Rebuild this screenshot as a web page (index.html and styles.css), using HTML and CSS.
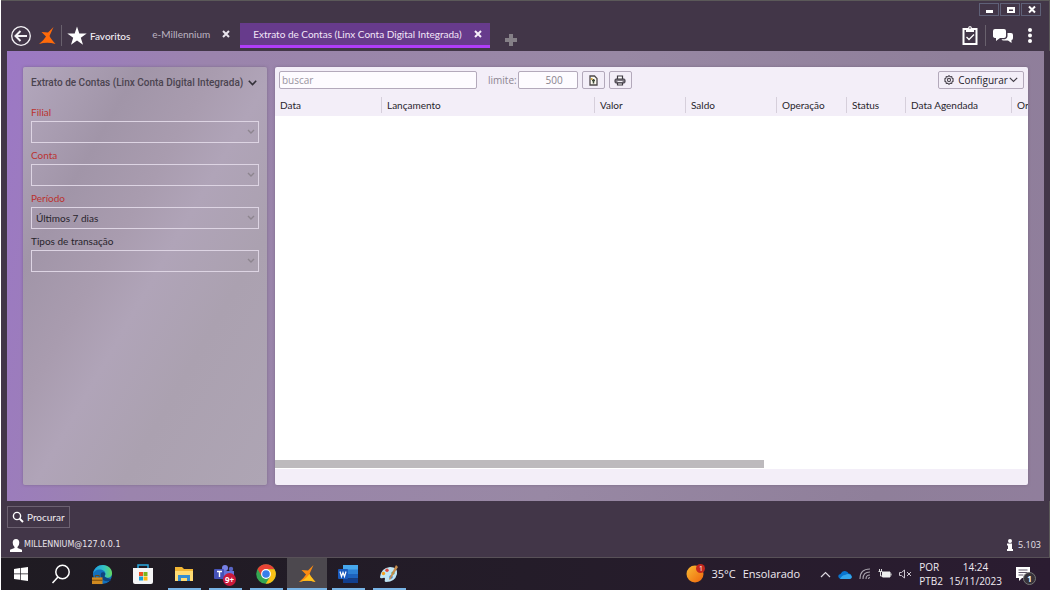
FILE: index.html
```html
<!DOCTYPE html>
<html lang="pt-BR">
<head>
<meta charset="utf-8">
<meta name="viewport" content="width=device-width, initial-scale=1">
<title>Extrato de Contas (Linx Conta Digital Integrada)</title>
<link rel="stylesheet" href="styles.css">
</head>
<body>
<div class="app">
  <div class="titlebar">
    <button class="win" aria-label="Minimizar"><svg width="19" height="11"><path d="M6 6h7v3H6z" fill="#fff"/></svg></button>
    <button class="win" aria-label="Maximizar"><svg width="19" height="11"><path d="M6 3h8v6H6zM8 5.500h4V7H8z" fill="#fff" fill-rule="evenodd"/></svg></button>
    <button class="win" aria-label="Fechar"><svg width="19" height="11"><path d="M7 2.500l6 6M13 2.500l-6 6" stroke="#fff" stroke-width="2"/></svg></button>
  </div>

  <header class="toolbar">
    <button class="icon-btn back" aria-label="Voltar"><svg width="22" height="22" viewBox="0 0 22 22" fill="none" stroke="#f4f2f6"><circle cx="11" cy="11" r="9.300" stroke-width="1.300"/><path d="M17 11H6M10.500 6l-5 5 5 5" stroke-width="2"/></svg></button>
    <button class="icon-btn logo" aria-label="Linx"><svg width="17" height="20" viewBox="0 0 17 20"><path d="M14.500 1L10.500 10Q12 13 16.500 18 8 15.500 0 18 5 14 7 10.500L2.500 6 9 6.500z" fill="#ff6a0a"/></svg></button>
    <span class="divider"></span>
    <button class="favorites"><svg width="20" height="20" viewBox="0 0 20 20"><path d="M10 .5l2.300 6.900 7.400.1-5.900 4.300 2.200 7L10 14.600l-6 4.200 2.200-7L.3 7.500l7.400-.1z" fill="#fff"/></svg><span>Favoritos</span></button>
    <nav class="tabs">
      <div class="tab"><a href="#">e-Millennium</a><button class="icon-btn" aria-label="Fechar e-Millennium"><svg width="8" height="8"><path d="M1 1l6 6M7 1L1 7" stroke="#e9e4ed" stroke-width="2"/></svg></button></div>
      <div class="tab active"><a href="#">Extrato de Contas (Linx Conta Digital Integrada)</a><button class="icon-btn" aria-label="Fechar Extrato de Contas"><svg width="8" height="8"><path d="M1 1l6 6M7 1L1 7" stroke="#f7effb" stroke-width="2"/></svg></button></div>
      <button class="icon-btn add" aria-label="Nova aba"><svg width="12" height="12"><path d="M6 0v12M0 6h12" stroke="#858087" stroke-width="4"/></svg></button>
    </nav>
    <div class="tools">
      <button class="icon-btn" aria-label="Tarefas"><svg width="16" height="21" viewBox="0 0 16 21" fill="none"><path d="M1.500 4h13v15h-13z" stroke="#fff" stroke-width="2"/><path d="M4 3.500h2Q6 1 8 1t2 2.500h2V7H4z" fill="#fff"/><circle cx="8" cy="3" r=".8" fill="#423648"/><path d="M4.500 12l2.500 2.500 5-5" stroke="#fff" stroke-width="1.300"/></svg></button>
      <span class="divider"></span>
      <button class="icon-btn" aria-label="Mensagens"><svg width="21" height="16" viewBox="0 0 21 16"><path d="M2 1h9q2 0 2 2v5q0 2-2 2H7l-4 3V10Q0 10 0 8V3q0-2 2-2z" fill="#fff"/><path d="M14.500 5H18q2 0 2 2v3q0 2-1.500 2v3L15 12.500h-4.500q-1.500 0-2-1.300H12q2.500-.5 2.500-3z" fill="#fff"/></svg></button>
      <button class="icon-btn" aria-label="Mais opções"><svg width="6" height="17"><g fill="#fff"><circle cx="3" cy="3" r="2"/><circle cx="3" cy="8.500" r="2"/><circle cx="3" cy="14" r="2"/></g></svg></button>
    </div>
  </header>

  <main class="workspace">
    <form class="filters">
      <button type="button" class="filters-title"><span>Extrato de Contas (Linx Conta Digital Integrada)</span><svg width="9" height="6"><path d="M.8.800l3.700 3.700L8.200.8" fill="none" stroke="#333038" stroke-width="1.600"/></svg></button>
      <label class="required" for="filial">Filial</label>
      <div class="select"><select id="filial"><option></option></select><svg width="8" height="6"><path d="M1 1l3 3 3-3" fill="none" stroke="#8d858f" stroke-width="1.400"/></svg></div>
      <label class="required" for="conta">Conta</label>
      <div class="select"><select id="conta"><option></option></select><svg width="8" height="6"><path d="M1 1l3 3 3-3" fill="none" stroke="#8d858f" stroke-width="1.400"/></svg></div>
      <label class="required" for="periodo">Período</label>
      <div class="select"><select id="periodo"><option>Últimos 7 dias</option></select><svg width="8" height="6"><path d="M1 1l3 3 3-3" fill="none" stroke="#8d858f" stroke-width="1.400"/></svg></div>
      <label for="tipos">Tipos de transação</label>
      <div class="select"><select id="tipos"><option></option></select><svg width="8" height="6"><path d="M1 1l3 3 3-3" fill="none" stroke="#8d858f" stroke-width="1.400"/></svg></div>
    </form>

    <section class="results">
      <div class="results-bar">
        <input class="search" type="text" placeholder="buscar" aria-label="buscar">
        <label class="limit-label" for="limite">limite:</label>
        <input class="limit" id="limite" type="text" value="500">
        <button class="tool" aria-label="Exportar"><svg width="9" height="11" viewBox="0 0 9 11"><path d="M1 1h4.500L8 3.500V10H1z" fill="#fbf9ef" stroke="#4d484a" stroke-width="1.300"/><path d="M4.500 8.500V4M3 5.500h3" stroke="#3e4a38" stroke-width="1.500"/><path d="M2 3h1.500v2H2z" fill="#d5a63c"/></svg></button>
        <button class="tool" aria-label="Imprimir"><svg width="12" height="11" viewBox="0 0 12 11"><path d="M3.500 4V1h5v3M3.500 7.500V10h5V7.500" fill="#fff" stroke="#3e3a42" stroke-width="1.200"/><rect x="1" y="4" width="10" height="4" rx="1" fill="#7b7780" stroke="#3e3a42"/><path d="M3.500 6.500h5" stroke="#f4f1f7"/></svg></button>
        <button class="configure"><svg width="10" height="10" viewBox="0 0 10 10" fill="none" stroke="#4b464f"><path d="M5 .7l1.200 1 1.500-.1.400 1.500L9.300 4 8.800 5l.5 1-1.200.9-.4 1.500-1.500-.1-1.200 1-1.200-1-1.500.1-.4-1.500L.7 6l.5-1-.5-1 1.200-.9.400-1.500 1.500.1z" stroke-width="1.100"/><circle cx="5" cy="5" r="1.600" stroke-width="1.100"/></svg><span>Configurar</span><svg width="9" height="6"><path d="M.8.800l3.700 3.700L8.200.8" fill="none" stroke="#47424b" stroke-width="1.200"/></svg></button>
      </div>
      <div class="grid">
        <table>
          <colgroup><col class="c-data"><col class="c-lanc"><col class="c-valor"><col class="c-valor"><col class="c-oper"><col class="c-status"><col class="c-agenda"><col></colgroup>
          <thead><tr><th>Data</th><th>Lançamento</th><th>Valor</th><th>Saldo</th><th>Operação</th><th>Status</th><th>Data Agendada</th><th>Or</th></tr></thead>
        </table>
      </div>
      <div class="scroll"><div class="thumb"></div></div>
      <div class="results-foot"></div>
    </section>
  </main>

  <footer class="actions">
    <button class="procurar"><svg width="12" height="12" viewBox="0 0 12 12" fill="none" stroke="#fff"><circle cx="5" cy="5" r="3.600" stroke-width="1.400"/><path d="M7.600 7.600L11 11" stroke-width="2"/></svg><span>Procurar</span></button>
    <div class="status">
      <span class="user"><svg width="12" height="13" viewBox="0 0 12 13"><path d="M6 0q3.300 0 3.300 3.800Q9.300 6.500 7.500 8v1l4.500 1.800V13H0v-2.200L4.500 9V8Q2.700 6.500 2.700 3.800 2.700 0 6 0z" fill="#fff"/></svg>MILLENNIUM@127.0.0.1</span>
      <span class="version"><svg width="6" height="12" viewBox="0 0 6 12" fill="#fff"><circle cx="3" cy="2" r="2"/><path d="M0 4.500h5V10h1v2H0v-2h1V6.500H0z"/></svg>5.103</span>
    </div>
  </footer>

  <div class="taskbar">
    <div class="apps">
      <button aria-label="Iniciar"><svg width="14" height="14" viewBox="0 0 14 14" fill="#fff"><path d="M0 2l6-.9v5.500H0zM6.700 1L14 0v6.600H6.700zM0 7.300h6v5.500L0 12zM6.700 7.300H14V14l-7.300-1z"/></svg></button>
      <button aria-label="Pesquisar"><svg width="20" height="20" viewBox="0 0 20 20" fill="none" stroke="#fff" stroke-width="1.500"><circle cx="11.500" cy="8" r="6.700"/><path d="M7 13l-5.500 6"/></svg></button>
      <button aria-label="Edge"><svg width="21" height="21" viewBox="0 0 22 22"><defs><linearGradient id="edge"><stop stop-color="#1e9be0"/><stop offset=".6" stop-color="#35c3c0"/><stop offset="1" stop-color="#66d95e"/></linearGradient></defs><circle cx="11" cy="11" r="10" fill="#1270bd"/><path d="M1 10.500C2 4.500 6 1 11.500 1 17 1 21 5 21 9.700c0 3.300-2.300 4.800-4.900 4.800-2.300 0-3.500-1-3-1.900.7-1 .9-1.600.9-2.500 0-2.500-2.600-4.400-6.200-4.400-3.200 0-5.800 1.900-6.800 4.800z" fill="url(#edge)"/><path d="M9.500 9.500c-1.500 4 1 8.500 6.500 8.500 2 0 3.300-.6 4-1.100-1-2.400-5-1.400-7-4.300.7-1 .9-1.600.9-2.500-1-1.500-3.200-2-4.400-.6z" fill="#10457f"/><path d="M0 14h11v7H0z" fill="#d08a20"/><path d="M3.500 14v-2h4v2M0 17h11" fill="none" stroke="#774809"/></svg></button>
      <button aria-label="Store"><svg width="20" height="21" viewBox="0 0 20 21"><path d="M5 5V1h10v4" fill="none" stroke="#29a9df" stroke-width="1.500"/><path d="M0 4h20v14q0 2-2 2H2q-2 0-2-2z" fill="#f5f5f6"/><path d="M6 8h4v4H6z" fill="#ee5023"/><path d="M10.500 8h4v4h-4z" fill="#7ab51d"/><path d="M6 12.500h4v4H6z" fill="#159fda"/><path d="M10.500 12.500h4v4h-4z" fill="#fab812"/></svg></button>
      <button class="open" aria-label="Explorador de Arquivos"><svg width="18" height="16" viewBox="0 0 18 16"><path d="M0 1h7l2 2h9v12H0z" fill="#f2b635"/><path d="M0 5h18v10H0z" fill="#ffdb73"/><path d="M3 9h12v6h-3v-3H6v3H3z" fill="#348ed1"/></svg></button>
      <button class="open" aria-label="Teams"><svg width="22" height="21" viewBox="0 0 22 21"><circle cx="11" cy="4" r="3" fill="#7680e5"/><circle cx="17" cy="5" r="2.200" fill="#5965c5"/><path d="M8 7h12v7q-3 4-6 4-6-1-6-5z" fill="#6572da"/><rect y="5" width="10" height="10" rx="1" fill="#4652b8"/><path d="M3 7.500h5M5.500 7.500V13" stroke="#fff" stroke-width="1.400"/></svg><span class="badge red">9+</span></button>
      <button class="open" aria-label="Chrome"><svg width="20" height="20" viewBox="0 0 20 20"><circle cx="10" cy="10" r="9.800" fill="#35a853"/><path d="M1.500 5.100A9.800 9.800 0 0 1 18.500 5.200H10L5.800 12.400z" fill="#e94335"/><path d="M18.500 5.200A9.800 9.800 0 0 1 9.700 19.800l4.500-7.400L10 5.200z" fill="#fbc116"/><circle cx="10" cy="10" r="4.900" fill="#fff"/><circle cx="10" cy="10" r="3.800" fill="#397fe9"/></svg></button>
      <button class="open current" aria-label="Millennium"><svg width="17" height="20" viewBox="0 0 17 20"><path d="M14.500 1L10.500 10Q12 13 16.500 18 8 15.500 0 18 5 14 7 10.500L2.500 6 9 6.500z" fill="#fb8a12"/><path d="M10.500 10Q12 13 16.500 18 8 15.500 0 18q6-2 10.500-8z" fill="#ffc21c"/></svg></button>
      <button class="open" aria-label="Word"><svg width="20" height="18" viewBox="0 0 20 18"><path d="M5 0h15v5H5z" fill="#47a8ed"/><path d="M5 4.500h15V9H5z" fill="#2d81d5"/><path d="M5 9h15v4.500H5z" fill="#1d62bc"/><path d="M5 13.500h15V18H5z" fill="#123f8e"/><rect y="4" width="10" height="10" rx="1" fill="#195abd"/><path d="M2 6.500l1.500 5L5 7.500l1.500 4 1.500-5" fill="none" stroke="#fff" stroke-width="1.200"/></svg></button>
      <button class="open" aria-label="Paint"><svg width="20" height="20" viewBox="0 0 20 20"><path d="M1 13Q2 4 11 3q8 0 7 7-2 8-11 8-2 0-1-3 0-2-2-1-3 1-3-1z" fill="#bfe5f5"/><circle cx="4.500" cy="9.500" r="1.700" fill="#f4a11e"/><circle cx="8" cy="6.300" r="1.700" fill="#d9483e"/><circle cx="14" cy="9" r="1.600" fill="#4a9e4a"/><circle cx="12" cy="13" r="1.700" fill="#2878cf"/><path d="M17 1l2 2-8 13-1-1z" fill="#c78c4b"/></svg></button>
    </div>
    <div class="tray">
      <button class="weather"><span class="sun"><svg width="18" height="18"><defs><linearGradient id="sun" x2="1" y2="1"><stop stop-color="#f8bb32"/><stop offset="1" stop-color="#ef650c"/></linearGradient></defs><circle cx="9" cy="9" r="8.500" fill="url(#sun)"/></svg><span class="alert">1</span></span><span>35°C</span><span>Ensolarado</span></button>
      <div class="tray-icons">
        <svg width="11" height="7"><path d="M1 6l4.500-4.500L10 6" fill="none" stroke="#ddd8e0" stroke-width="1.200"/></svg>
        <svg width="14" height="9" viewBox="0 0 14 9"><path d="M1 8Q-1 5 2.500 4 5-1 9.500 2l1 1.500Q14 4 13.500 7q-.5 2-2 2h-9z" fill="#0875cf"/><path d="M2 9Q4 5 7 5q5-3 7 2-.5 2-2.500 2z" fill="#34a6ec"/></svg>
        <svg width="12" height="12" viewBox="0 0 12 12" fill="none" stroke="#aaa4ae" stroke-width="1.100"><path d="M1 11Q1 1 11 1M4 11Q4 4 11 4M7 11q0-4 4-4M9.500 11q0-1.500 1.500-1.500"/></svg>
        <svg width="14" height="10" viewBox="0 0 14 10"><path d="M4.500 3H12v5H4.500zM13 4.500v2" fill="#eee" stroke="#eee"/><path d="M1.500 0v2M3.500 0v2M.5 2.500h4M2.500 3v4h2" fill="none" stroke="#ddd"/></svg>
        <svg width="13" height="10" viewBox="0 0 13 10" fill="none" stroke="#ccc6d0"><path d="M.5 3.500h2L5.500 1v8l-3-2.500h-2zM8 3l4 4M12 3L8 7"/></svg>
      </div>
      <div class="stack lang"><span>POR</span><span>PTB2</span></div>
      <div class="stack clock"><span>14:24</span><span>15/11/2023</span></div>
      <button class="notes" aria-label="Notificações"><svg width="14" height="14" viewBox="0 0 14 14"><path d="M0 0h14v11H6l-3 3v-3H0z" fill="#fff"/><path d="M2.500 3h9M2.500 5.500h9M2.500 8h5" stroke="#5f5668"/></svg><span class="badge dark">1</span></button>
    </div>
  </div>
</div>
</body>
</html>
```
FILE: styles.css
```css
* { box-sizing: border-box; }

body {
  margin: 0;
  background: #fff;
  font-family: Lato, "Open Sans", sans-serif;
  font-size: 10px;
  line-height: 14px;
  color: #28242c;
}

button, input, select { font: inherit; color: inherit; }
button { margin: 0; padding: 0; border: 0; background: none; }
a { color: inherit; text-decoration: none; }
svg { display: block; flex: none; }

.app {
  display: flex;
  flex-direction: column;
  height: 100vh;
  padding: 0 1px 1px;
  overflow: hidden;
}

/* Window frame and tabs */
.titlebar {
  display: flex;
  justify-content: flex-end;
  gap: 1px;
  height: 20px;
  padding: 2px 8px 0 0;
  border-top: 1px solid #5b5959;
  border-right: 1px solid #5b5959;
  background: #423648;
}
.win { height: 13px; border: 1px solid #5f6178; }
.win svg { width: 18px; }

.toolbar {
  display: flex;
  align-items: center;
  height: 31px;
  padding: 0 16px 0 9px;
  border-right: 1px solid #5b5959;
  background: #423648;
  color: #f3eff5;
}
.icon-btn { display: flex; align-items: center; justify-content: center; }
.logo { margin: 0 5px 0 7px; }
.divider { width: 1px; height: 21px; background: #69616d; }
.favorites { display: flex; align-items: center; gap: 3px; margin-left: 5px; font-weight: 500; }

.tabs { display: flex; align-self: stretch; margin-left: 12px; padding: 3px 0; }
.tab {
  display: flex;
  align-items: center;
  justify-content: space-between;
  gap: 12px;
  padding: 0 10px;
  color: #bdb5c2;
  border-bottom: 3px solid transparent;
}
.tab.active {
  padding: 0 8px 0 13px;
  background: #673b8c;
  color: #f3e7f8;
  border-color: #b03dfa;
}
.add { margin: 8px 0 0 15px; }

.tools { display: flex; align-items: center; gap: 7px; margin-left: auto; }
.tools .icon-btn:last-child { margin-left: 6px; }

/* Work area */
.workspace {
  flex: 1;
  min-height: 0;
  display: flex;
  gap: 8px;
  padding: 16px;
  border: solid #423648;
  border-width: 0 6px;
  background: linear-gradient(100deg, #9c78c5 0, #9b84ad 18%, #9888a4 55%, #8f7f9a 85%, #907e9c 100%);
}

.filters {
  flex: 0 0 244px;
  min-width: 0;
  display: flex;
  flex-direction: column;
  padding: 9px 8px;
  border-radius: 2px;
  background: linear-gradient(120deg, #b3a7bd 0, #a195a8 24%, #a99caf 40%, #b0a4b8 52%, #aba1b0 70%, #aea5b4 100%);
  box-shadow: 0 0 3px #62516f88;
}
.filters-title {
  display: flex;
  align-items: center;
  gap: 5px;
  height: 14px;
  margin-bottom: 15px;
  color: #4b4450;
  font-family: Roboto, "Open Sans", sans-serif;
  font-weight: 500;
  white-space: nowrap;
}
.filters label { height: 16px; }
.filters label.required { color: #bb3330; }
.select { position: relative; margin-bottom: 5px; }
.select select {
  display: block;
  width: 100%;
  height: 22px;
  padding: 0 4px;
  border: 1px solid #ddd4e3;
  border-radius: 0;
  background: transparent;
  appearance: none;
}
.select svg { position: absolute; right: 4px; top: 8px; pointer-events: none; }

.results {
  flex: 1;
  min-width: 0;
  display: flex;
  flex-direction: column;
  border-radius: 2px;
  background: #f3eef8;
  overflow: hidden;
  box-shadow: 0 0 3px #62516f88;
}
.results-bar {
  display: flex;
  align-items: center;
  height: 26px;
  padding: 0 4px;
  font-family: "Open Sans", "Noto Sans", sans-serif;
}
.results-bar input {
  height: 18px;
  border: 1px solid #b3a9bb;
  border-radius: 2px;
  background: #fdfbff;
}
.search { width: 198px; padding: 0 2px; }
.search::placeholder { color: #9a94a0; opacity: 1; }
.limit-label { margin: 0 1px 0 11px; color: #8b8490; }
.limit { width: 60px; padding: 0 14px 0 4px; text-align: right; color: #89838d; }
.tool, .configure {
  display: flex;
  align-items: center;
  justify-content: center;
  height: 18px;
  border: 1px solid #b3a9bb;
  border-radius: 2px;
}
.tool { width: 23px; margin-left: 4px; }
.configure { width: 86px; margin-left: auto; gap: 4px; }
.configure svg:last-child { margin-left: -3px; }

.grid { flex: 1; min-height: 0; background: #fff; overflow: hidden; }
.grid table { width: 100%; table-layout: fixed; border-collapse: collapse; background: #f3eef8; }
.grid th {
  height: 23px;
  padding: 0 0 0 5px;
  font-weight: 400;
  text-align: left;
}
.grid th:not(:last-child) {
  background: linear-gradient(#d6cfdb, #d6cfdb) right center / 1px 16px no-repeat;
}
.c-data { width: 107px; }
.c-lanc { width: 213px; }
.c-valor { width: 91px; }
.c-oper { width: 70px; }
.c-status { width: 59px; }
.c-agenda { width: 106px; }
.scroll { height: 9px; background: #fff; }
.thumb { width: 65%; height: 8px; background: #bdbabd; }
.results-foot { height: 16px; }

/* Actions and status */
.actions { padding: 5px 8px 4px 6px; border-right: 1px solid #5b5959; background: #423648; color: #e9e4ec; }
.procurar {
  display: flex;
  align-items: center;
  gap: 3px;
  height: 22px;
  padding: 0 4px;
  border: 1px solid #6c6171;
  color: #f1edf3;
}
.status { display: flex; justify-content: space-between; align-items: center; height: 25px; padding: 9px 0 0 3px; }
.user, .version { display: flex; align-items: center; gap: 2px; }
.user { font-family: "DejaVu Sans", sans-serif; font-size: 8px; }
.version { gap: 5px; font-family: "Open Sans", sans-serif; font-size: 9px; }

/* System taskbar */
.taskbar {
  display: flex;
  justify-content: space-between;
  height: 33px;
  border-top: 1px solid #585158;
  background: linear-gradient(90deg, #1f1b22, #241c29 50%, #2b1c31);
  font-family: "Open Sans", "Noto Sans", sans-serif;
  color: #efeaf1;
}
.apps { display: flex; gap: 1px; }
.apps button {
  position: relative;
  display: flex;
  align-items: center;
  justify-content: center;
  width: 40px;
}
.apps button:first-child { width: 39px; }
.apps .open { background: linear-gradient(#78b4e6, #78b4e6) center bottom / 33px 2px no-repeat; }
.apps .current { background: linear-gradient(#78b4e6, #78b4e6) center bottom / 100% 2px no-repeat #4c484e; }
.badge {
  position: absolute;
  display: flex;
  align-items: center;
  justify-content: center;
  width: 13px;
  height: 13px;
  border-radius: 50%;
  font-size: 8px;
  font-weight: 700;
  color: #fff;
}
.badge.red { left: 18px; top: 15px; background: #c9193a; }
.badge.dark { right: -6px; top: 5px; border: 1px solid #777; background: #37333a; }

.tray { display: flex; align-items: center; padding-right: 20px; font-size: 11px; }
.weather { display: flex; align-items: center; gap: 7px; }
.sun { position: relative; }
.alert {
  position: absolute;
  top: -1px;
  right: -1px;
  width: 9px;
  height: 9px;
  border-radius: 50%;
  background: #c3271e;
  color: #fff;
  font-size: 7px;
  line-height: 9px;
  text-align: center;
}
.tray-icons { display: flex; align-items: center; gap: 7px; margin: 0 7px 0 20px; }
.stack { display: flex; flex-direction: column; font-size: 10px; }
.clock { align-items: center; margin: 0 14px 0 6px; }
.notes { position: relative; }
```
